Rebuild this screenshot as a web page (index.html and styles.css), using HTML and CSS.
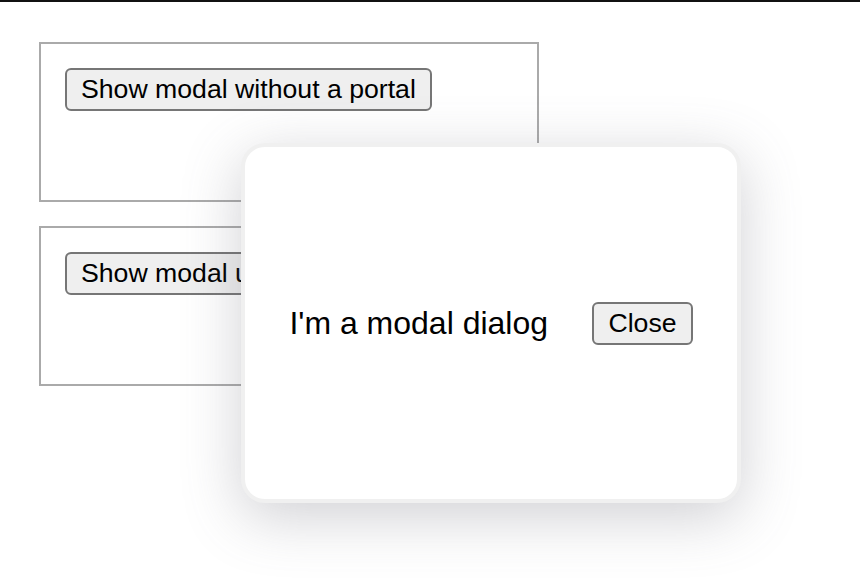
FILE: index.html
```html
<!DOCTYPE html>
<html lang="en">
<head>
<meta charset="utf-8">
<title>Portal modal</title>
<link rel="stylesheet" href="styles.css">
</head>
<body>
  <div class="topbar"></div>
  <main class="page">
    <div class="clipping-container">
      <button class="btn">Show modal without a portal</button>
    </div>
    <div class="clipping-container">
      <button class="btn">Show modal using a portal</button>
    </div>
  </main>
  <div class="modal">
    <div class="modal-text">I'm a modal dialog</div>
    <button class="btn">Close</button>
  </div>
</body>
</html>
```
FILE: styles.css
```css
html, body {
  margin: 0;
  padding: 0;
  background: #ffffff;
}

body {
  font-family: "Liberation Sans", Arial, sans-serif;
  font-size: 32px;
  color: #000000;
  position: relative;
  min-height: 580px;
}

.topbar {
  height: 2px;
  background: #111111;
}

.page {
  padding: 40px 39px 0;
  display: flex;
  flex-direction: column;
  gap: 24px;
}

.clipping-container {
  box-sizing: border-box;
  width: 500px;
  height: 160px;
  border: 2px solid #aaaaaa;
  padding: 24px;
  overflow: hidden;
}

.btn {
  font-family: "Liberation Sans", Arial, sans-serif;
  font-size: 26.67px;
  line-height: normal;
  color: #000000;
  background: #efefef;
  border: 2px solid #767676;
  border-radius: 6px;
  padding: 4px 14px;
  margin: 0;
  white-space: nowrap;
}

.modal {
  position: absolute;
  left: 241px;
  top: 143px;
  box-sizing: border-box;
  width: 500px;
  height: 360px;
  display: flex;
  justify-content: space-evenly;
  align-items: center;
  background: #ffffff;
  border: 4px solid #f0f0f0;
  border-radius: 24px;
  box-shadow: rgba(100, 100, 111, 0.3) 0 14px 58px 0;
}

.modal-text {
  font-size: 32px;
}
```
